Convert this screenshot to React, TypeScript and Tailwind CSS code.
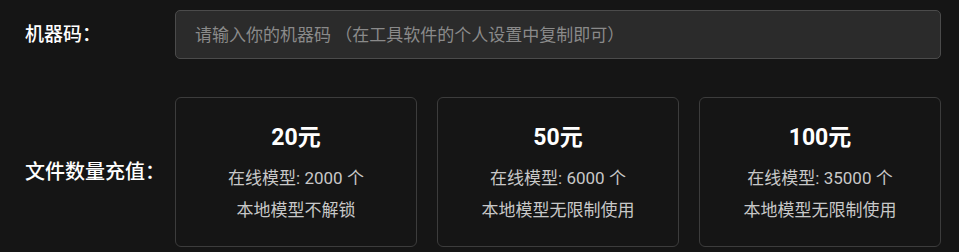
import React from 'react';

const plans = [
    { price: '20元', online: '在线模型: 2000 个', local: '本地模型不解锁' },
    { price: '50元', online: '在线模型: 6000 个', local: '本地模型无限制使用' },
    { price: '100元', online: '在线模型: 35000 个', local: '本地模型无限制使用' },
];

export default function App() {
    return (
        <div
            className="w-[959px] h-[252px] bg-[#151515] pl-[25px] pr-[18px] pt-[10px] flex flex-col gap-[38px]"
            style={{ fontFamily: 'Roboto, "Noto Sans CJK SC", sans-serif' }}
        >
            {/* Machine code row */}
            <div className="flex items-center">
                <label className="w-[150px] text-[19px] font-medium text-white pt-[2px]">机器码：</label>
                <input
                    className="flex-1 h-[49px] rounded-[5px] bg-[#2b2b2b] border border-[#4b4b4b] px-[19px] text-[17px] text-[#ddd] placeholder:text-[#8a8a8a] outline-none"
                    placeholder="请输入你的机器码 （在工具软件的个人设置中复制即可）"
                />
            </div>

            {/* Recharge row */}
            <div className="flex items-center">
                <div className="w-[150px] text-[20px] font-medium text-white">文件数量充值：</div>
                <div className="flex-1 grid grid-cols-3 gap-[20px]">
                    {plans.map((p) => (
                        <div
                            key={p.price}
                            className="h-[150px] rounded-[6px] border border-[#3c3c3c] bg-[#151515] flex flex-col items-center pt-[25px]"
                        >
                            <div className="text-[23px] font-bold text-white leading-[30px]">{p.price}</div>
                            <div className="mt-[9px] text-[17px] text-[#c8c8c8] leading-[32px]">{p.online}</div>
                            <div className="text-[17px] text-[#c8c8c8] leading-[32px]">{p.local}</div>
                        </div>
                    ))}
                </div>
            </div>
        </div>
    );
}
